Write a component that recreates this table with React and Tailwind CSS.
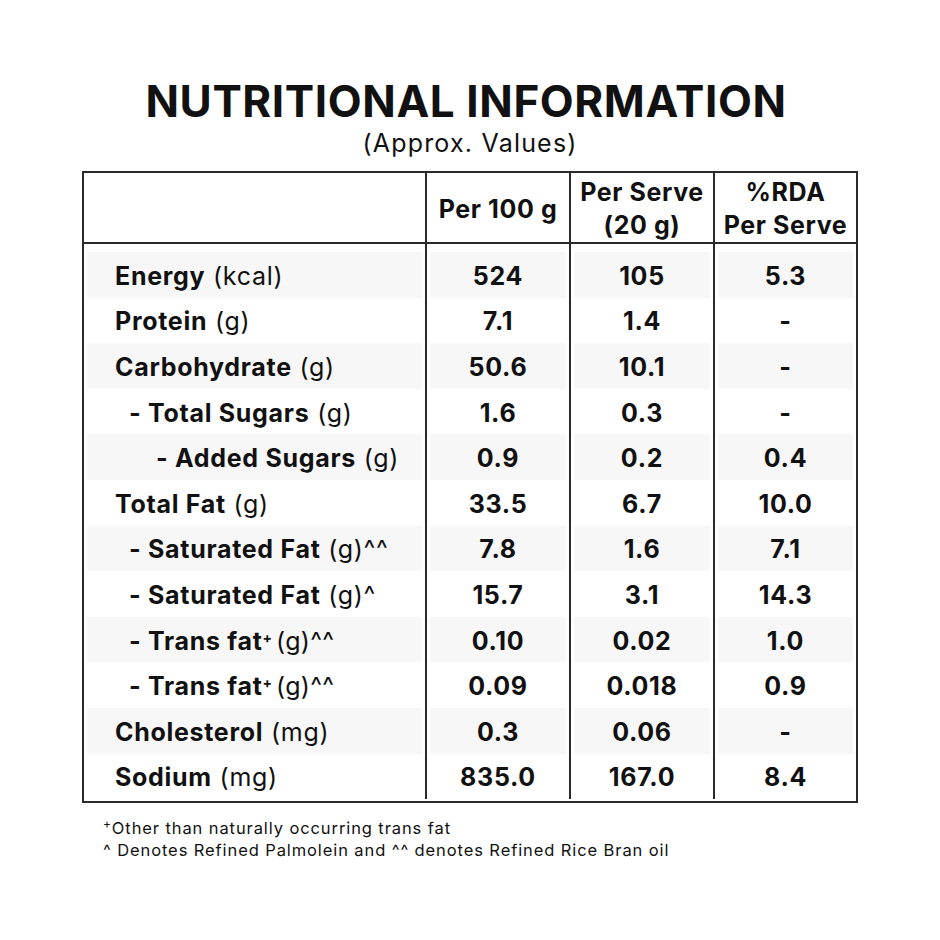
import React from "react";

const rows = [
  { label: "Energy", unit: "(kcal)", lvl: 0, a: "524", b: "105", c: "5.3" },
  { label: "Protein", unit: "(g)", lvl: 0, a: "7.1", b: "1.4", c: "-" },
  { label: "Carbohydrate", unit: "(g)", lvl: 0, a: "50.6", b: "10.1", c: "-" },
  { label: "- Total Sugars", unit: "(g)", lvl: 1, a: "1.6", b: "0.3", c: "-" },
  { label: "- Added Sugars", unit: "(g)", lvl: 2, a: "0.9", b: "0.2", c: "0.4" },
  { label: "Total Fat", unit: "(g)", lvl: 0, a: "33.5", b: "6.7", c: "10.0" },
  { label: "- Saturated Fat", unit: "(g)^^", lvl: 1, a: "7.8", b: "1.6", c: "7.1" },
  { label: "- Saturated Fat", unit: "(g)^", lvl: 1, a: "15.7", b: "3.1", c: "14.3" },
  { label: "- Trans fat", sup: true, unit: "(g)^^", lvl: 1, a: "0.10", b: "0.02", c: "1.0" },
  { label: "- Trans fat", sup: true, unit: "(g)^^", lvl: 1, a: "0.09", b: "0.018", c: "0.9" },
  { label: "Cholesterol", unit: "(mg)", lvl: 0, a: "0.3", b: "0.06", c: "-" },
  { label: "Sodium", unit: "(mg)", lvl: 0, a: "835.0", b: "167.0", c: "8.4" },
];

const font = { fontFamily: "Inter, 'Open Sans', sans-serif" };

function Cell({ children, shaded, first, className = "", inner = "" }) {
  return (
    <div className={`${first ? "h-[53.6px] pt-[8px]" : "h-[45.6px]"} ${className}`}>
      <div className={`h-full mx-[3px] flex items-center pt-[2px] ${shaded ? "bg-[#f7f7f7]" : "bg-white"} ${inner}`}>
        {children}
      </div>
    </div>
  );
}

export default function App() {
  return (
    <div className="w-[940px] h-[940px] bg-white text-[#111] pt-[74px]" style={font}>
      <h1 className="text-center text-[44px] font-bold leading-[54px] tracking-[0.6px] pr-[8px]">
        NUTRITIONAL INFORMATION
      </h1>
      <div className="text-center text-[25px] leading-[30px] tracking-[1.2px]">(Approx. Values)</div>
      <div className="mx-auto mt-[13px] w-[776px] border-2 border-[#2a2a2a]">
        <div className="grid grid-cols-[341px_144px_144px_143px] h-[71px] pt-[3px] border-b-2 border-[#2a2a2a] text-[25px] font-bold leading-[33px] text-center tracking-[0.6px]">
          <div />
          <div className="border-l-2 border-[#2a2a2a] -mt-[3px] pt-[3px] flex items-center justify-center">Per 100 g</div>
          <div className="border-l-2 border-[#2a2a2a] -mt-[3px] pt-[3px] flex items-center justify-center">
            Per Serve<br />(20 g)
          </div>
          <div className="border-l-2 border-[#2a2a2a] -mt-[3px] pt-[3px] flex items-center justify-center">
            %RDA<br />Per Serve
          </div>
        </div>
        <div className="grid grid-cols-[341px_144px_144px_143px] text-[25px] leading-[30px] pb-[2px] tracking-[0.7px]">
          {rows.map((r, i) => {
            const shaded = i % 2 === 0;
            const first = i === 0;
            const pl = r.lvl === 0 ? "pl-[28px]" : r.lvl === 1 ? "pl-[42px]" : "pl-[69px]";
            return (
              <React.Fragment key={i}>
                <Cell shaded={shaded} first={first} inner={pl}>
                  <span className="font-bold">{r.label}</span>
                  {r.sup ? (
                    <>
                      <sup className="text-[14px] font-bold relative top-[-3px] tracking-normal">+</sup>
                      <span className="ml-[4px] tracking-[0.3px]">{r.unit}</span>
                    </>
                  ) : (
                    <span>&nbsp;{r.unit}</span>
                  )}
                </Cell>
                <Cell shaded={shaded} first={first} className="border-l-2 border-[#2a2a2a]" inner="justify-center font-bold">
                  {r.a}
                </Cell>
                <Cell shaded={shaded} first={first} className="border-l-2 border-[#2a2a2a]" inner="justify-center font-bold">
                  {r.b}
                </Cell>
                <Cell shaded={shaded} first={first} className="border-l-2 border-[#2a2a2a]" inner="justify-center font-bold">
                  {r.c}
                </Cell>
              </React.Fragment>
            );
          })}
        </div>
      </div>
      <div className="ml-[103px] mt-[14px] text-[16.5px] leading-[22px] tracking-[0.9px]">
        <div>
          <sup className="text-[12px]">+</sup>Other than naturally occurring trans fat
        </div>
        <div>^ Denotes Refined Palmolein and ^^ denotes Refined Rice Bran oil</div>
      </div>
    </div>
  );
}
